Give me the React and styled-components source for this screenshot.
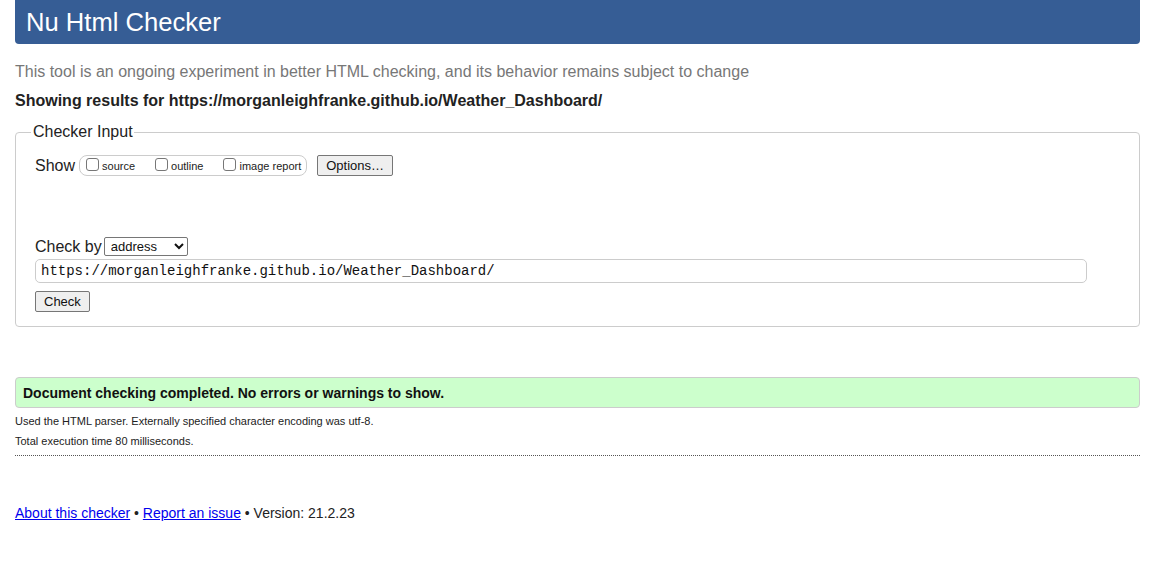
import React from 'react';
import styled, { createGlobalStyle } from 'styled-components';

const Global = createGlobalStyle`
  html, body { margin: 0; padding: 0; background: #fff; }
  body {
    font-family: "Liberation Sans", Arial, sans-serif;
    color: #222;
    padding: 0 16px 0 15px;
  }
`;

const Header = styled.h1`
  margin: 0;
  height: 44px;
  padding: 0 11px;
  display: flex;
  align-items: center;
  background: #365d95;
  color: #fff;
  font-size: 25.6px;
  font-weight: normal;
  border-radius: 0 0 4px 4px;
`;

const Intro = styled.p`
  margin: 18px 0 0;
  font-size: 16px;
  color: #777;
  line-height: 20px;
`;

const Results = styled.p`
  margin: 9px 0 0;
  font-size: 16px;
  font-weight: bold;
  line-height: 20px;
`;

const Fieldset = styled.fieldset`
  margin: 12px 0 0;
  padding: 10px 19px 14px;
  border: 1px solid #ccc;
  border-radius: 4px;
  min-width: 0;
`;

const Legend = styled.legend`
  margin-left: -4px;
  padding: 0 1px 0 2px;
  font-size: 16px;
  color: #222;
  line-height: 18px;
`;

const Row = styled.div`
  display: flex;
  align-items: center;
  margin-top: ${(p) => p.$top || 0}px;
`;

const Label = styled.span`
  font-size: 16px;
  color: #222;
`;

const ShowGroup = styled.div`
  display: flex;
  align-items: center;
  gap: 20px;
  margin-left: 4px;
  height: 19px;
  padding: 0 5px 0 6px;
  border: 1px solid #ccc;
  border-radius: 8px;
`;

const CheckItem = styled.label`
  display: flex;
  align-items: center;
  font-size: 11px;
  color: #222;
  gap: 3px;
`;

const Box = styled.input.attrs({ type: 'checkbox' })`
  appearance: none;
  margin: 0;
  width: 13px;
  height: 13px;
  border: 1px solid #777;
  border-radius: 3px;
  background: #fff;
  position: relative;
  top: -1px;
`;

const Button = styled.button`
  font-family: "Liberation Sans", Arial, sans-serif;
  font-size: 13px;
  color: #111;
  background: #efefef;
  border: 1px solid #767676;
  border-radius: 2px;
  padding: 0 8px;
  height: 21px;
  margin-left: ${(p) => p.$ml || 0}px;
`;

const Select = styled.select`
  font-family: "Liberation Sans", Arial, sans-serif;
  font-size: 13px;
  color: #111;
  width: 84px;
  height: 19px;
  margin-left: 2px;
  border: 1px solid #767676;
  border-radius: 2px;
  background: #fff;
  padding: 0 2px;
`;

const UrlInput = styled.input`
  display: block;
  box-sizing: border-box;
  width: 1052px;
  height: 24px;
  margin-top: 3px;
  padding: 0 5px;
  font-family: "Liberation Mono", "DejaVu Sans Mono", monospace;
  font-size: 14px;
  color: #111;
  border: 1px solid #ccc;
  border-radius: 5px;
  outline: none;
`;

const Success = styled.div`
  margin-top: 50px;
  height: 29px;
  display: flex;
  align-items: center;
  padding: 0 7px;
  background: #ccffcc;
  border: 1px solid #ccc;
  border-radius: 4px;
  font-size: 14px;
  font-weight: bold;
  color: #111;
`;

const Note = styled.p`
  margin: ${(p) => p.$top || 0}px 0 0;
  font-size: 11px;
  line-height: 14px;
  color: #222;
`;

const Rule = styled.hr`
  margin: 7px 0 0;
  border: 0;
  border-top: 1px dotted #555;
`;

const Footer = styled.p`
  margin: 49px 0 0;
  font-size: 14px;
  color: #222;
  a { color: #0000ee; text-decoration: underline; }
`;

export default function App() {
  return (
    <>
      <Global />
      <Header>Nu Html Checker</Header>
      <Intro>This tool is an ongoing experiment in better HTML checking, and its behavior remains subject to change</Intro>
      <Results>Showing results for https://morganleighfranke.github.io/Weather_Dashboard/</Results>

      <Fieldset>
        <Legend>Checker Input</Legend>
        <Row $top={4}>
          <Label>Show</Label>
          <ShowGroup>
            <CheckItem><Box />source</CheckItem>
            <CheckItem><Box />outline</CheckItem>
            <CheckItem><Box />image report</CheckItem>
          </ShowGroup>
          <Button $ml={10}>Options…</Button>
        </Row>
        <Row $top={61}>
          <Label>Check by</Label>
          <Select defaultValue="address">
            <option value="address">address</option>
          </Select>
        </Row>
        <UrlInput readOnly value="https://morganleighfranke.github.io/Weather_Dashboard/" />
        <Row $top={8}>
          <Button>Check</Button>
        </Row>
      </Fieldset>

      <Success>Document checking completed. No errors or warnings to show.</Success>
      <Note $top={6}>Used the HTML parser. Externally specified character encoding was utf-8.</Note>
      <Note $top={6}>Total execution time 80 milliseconds.</Note>
      <Rule />
      <Footer>
        <a href="#about">About this checker</a> • <a href="#report">Report an issue</a> • Version: 21.2.23
      </Footer>
    </>
  );
}
